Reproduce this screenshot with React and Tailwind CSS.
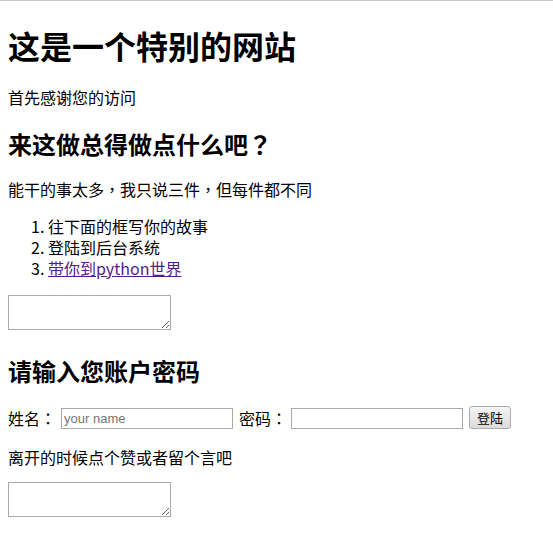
function P({ children }) {
  return <span className="font-['Noto_Sans_CJK_TC',sans-serif]">{children}</span>;
}

export default function App() {
  return (
    <div className="min-h-[551px] w-full bg-white border-t border-[#c3c3c3] px-[8px] text-black text-[16px] leading-[21px] font-['Noto_Sans_CJK_SC',sans-serif]">
      <h1 className="mt-[26px] text-[32px] leading-[36px] font-bold">这是一个特别的网站</h1>
      <p className="mt-[24px]">首先感谢您的访问</p>
      <h2 className="mt-[22px] text-[24px] leading-[28px] font-bold">
        来这做总得做点什么吧<P>？</P>
      </h2>
      <p className="mt-[21px]">
        能干的事太多<P>，</P>我只说三件<P>，</P>但每件都不同
      </p>
      <ol className="mt-[16px] list-decimal pl-[40px]">
        <li>往下面的框写你的故事</li>
        <li>登陆到后台系统</li>
        <li>
          <a href="#" className="text-[#551a8b] underline">带你到python世界</a>
        </li>
      </ol>
      <div className="mt-[16px] flex">
        <textarea className="block w-[163px] h-[35px] border border-[#a9a9a9] bg-white"></textarea>
      </div>
      <h2 className="mt-[27px] text-[24px] leading-[28px] font-bold">请输入您账户密码</h2>
      <div className="mt-[20px] flex items-start h-[24px]">
        <span className="mt-[3px] leading-[21px]">
          姓名<P>：</P>
        </span>
        <input
          type="text"
          placeholder="your name"
          className="ml-[5px] mt-[3px] w-[172px] h-[21px] border border-[#a9a9a9] px-[2px] text-[13px] placeholder:text-[#757575] font-['Liberation_Sans',sans-serif]"
        />
        <span className="ml-[6px] mt-[3px] leading-[21px]">
          密码<P>：</P>
        </span>
        <input
          type="password"
          className="ml-[4px] mt-[3px] w-[172px] h-[21px] border border-[#a9a9a9] px-[2px] text-[13px]"
        />
        <button className="ml-[6px] mt-[1px] w-[42px] h-[23px] border border-[#acacac] rounded-[3px] bg-gradient-to-b from-[#f4f4f4] to-[#dcdcdc] text-[13px] leading-[21px] text-black">
          登陆
        </button>
      </div>
      <p className="mt-[18px]">离开的时候点个赞或者留个言吧</p>
      <div className="mt-[14px] flex">
        <textarea className="block w-[163px] h-[35px] border border-[#a9a9a9] bg-white"></textarea>
      </div>
    </div>
  );
}
